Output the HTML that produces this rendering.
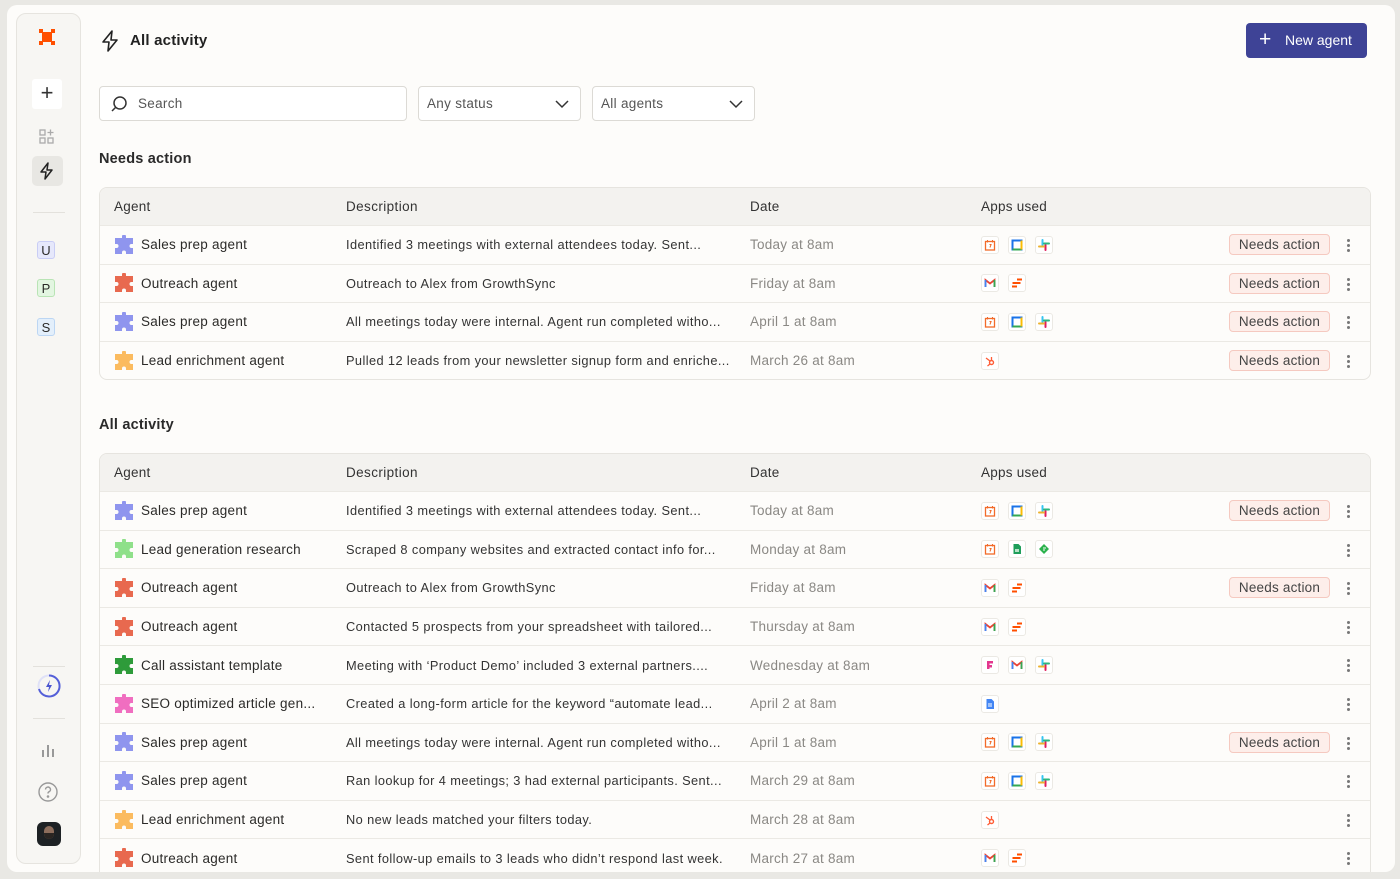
<!DOCTYPE html>
<html><head><meta charset="utf-8"><style>
*{box-sizing:border-box;margin:0;padding:0}
html,body{width:1400px;height:879px;overflow:hidden}
body{background:#e9e8e4;font-family:"Liberation Sans",sans-serif;color:#2b2a28;position:relative}
.card{position:absolute;left:7px;top:5px;width:1388px;height:867px;background:#fdfcfa;border-radius:10px;overflow:hidden}
.side{position:absolute;left:16px;top:13px;width:65px;height:851px;background:#f7f6f3;border:1px solid #e6e4df;border-radius:10px}
.abs{position:absolute}
.tbl{position:absolute;left:99px;width:1272px;border:1px solid #e6e4df;border-radius:8px;background:#fdfcfa;overflow:hidden}
.row{display:flex;align-items:center;height:38.6px;border-top:1px solid #ebe9e4;font-size:13.5px;position:relative;letter-spacing:0.25px}
.hd{background:#f3f2ef;border-top:none;height:37px;font-size:13.5px;color:#333}
.c1{position:absolute;left:14px;display:flex;align-items:center}
.c2{position:absolute;left:246px;font-size:12.8px;color:#333;letter-spacing:0.4px}
.c3{position:absolute;left:650px;color:#8a8884}
.c4{position:absolute;left:881px;display:flex;gap:9px}
.hd .c3{color:#333}
.pz{width:20px;height:20px;margin-right:7px}
.ap{width:18px;height:18px;border:1px solid #ebe9e4;border-radius:3px;background:#fff;display:flex;align-items:center;justify-content:center}
.pill{position:absolute;left:1129px;top:8px;height:21px;width:101px;border:1px solid #f5c9c0;background:#fdeeea;border-radius:4px;font-size:13.5px;color:#444;text-align:center;line-height:19px;letter-spacing:0.2px}
.dots{position:absolute;left:1247px;top:13px;width:3px}
.dots i{display:block;width:3px;height:3px;border-radius:50%;background:#777;margin-bottom:2px}
.sel{position:absolute;top:86px;height:35px;border:1px solid #dcdad5;border-radius:4px;background:#fff;font-size:13.5px;color:#555;line-height:33px;padding-left:8px;letter-spacing:0.3px}
.badge{position:absolute;left:37px;width:18px;height:18px;border-radius:3px;font-size:13px;text-align:center;line-height:17px}
</style></head><body>
<svg width="0" height="0" style="position:absolute"><defs>
<symbol id="pz" viewBox="0 0 20 20"><path d="M1 3h7V1.5a2 2 0 0 1 4 0V3h7v6h-1.5a2 2 0 0 0 0 4H19v6h-7v-1.5a2 2 0 0 0-4 0V19H1v-6h1.5a2 2 0 0 0 0-4H1z"/></symbol>
<symbol id="cal" viewBox="0 0 12 12"><rect x="1.5" y="2.5" width="9" height="8.5" fill="none" stroke="#f26b2a" stroke-width="1.3"/><path d="M3.5 1v2.5M8.5 1v2.5M5.5 5.5h1.5l-1 3" stroke="#f26b2a" stroke-width="1.1" fill="none"/></symbol>
<symbol id="gc" viewBox="0 0 12 12"><rect x="1.5" y="1.5" width="9" height="9" fill="none" stroke="#1a73e8" stroke-width="2"/><path d="M1.5 10.5h9" stroke="#34a853" stroke-width="2"/><path d="M10.5 1.5v9" stroke="#fbbc04" stroke-width="2"/></symbol>
<symbol id="sl" viewBox="0 0 12 12"><path d="M4.5 1v5" stroke="#36c5f0" stroke-width="2" stroke-linecap="round"/><path d="M7.5 6v5" stroke="#e01e5a" stroke-width="2" stroke-linecap="round"/><path d="M6 4.5h5" stroke="#2eb67d" stroke-width="2" stroke-linecap="round"/><path d="M1 7.5h5" stroke="#ecb22e" stroke-width="2" stroke-linecap="round"/></symbol>
<symbol id="gm" viewBox="0 0 12 12"><path d="M1.5 10V3l4.5 3.5L10.5 3v7" fill="none" stroke="#ea4335" stroke-width="1.8"/><path d="M1.5 10V3" stroke="#4285f4" stroke-width="1.8"/><path d="M10.5 10V3" stroke="#34a853" stroke-width="1.8"/></symbol>
<symbol id="zp" viewBox="0 0 12 12"><path d="M6 2.5h5M1.5 6h8M1 9.5h5" stroke="#ff4f00" stroke-width="2"/></symbol>
<symbol id="hs" viewBox="0 0 12 12"><circle cx="7.5" cy="7.5" r="2" fill="none" stroke="#ff5c35" stroke-width="1.4"/><path d="M7.5 5.5V2M6 6 2 3M6 9l-2.5 2" stroke="#ff5c35" stroke-width="1.3"/></symbol>
<symbol id="sh" viewBox="0 0 12 12"><path d="M2.5 1h5l2.5 2.5V11h-7.5z" fill="#1e9e5a"/><rect x="4" y="6" width="4" height="3" fill="#b7e1c7"/></symbol>
<symbol id="fd" viewBox="0 0 12 12"><path d="M6 1l5 5-5 5-5-5z" fill="#2bb24c"/><path d="M5 5h3M5 7h2" stroke="#fff" stroke-width="1"/></symbol>
<symbol id="fg" viewBox="0 0 12 12"><path d="M3 2h6v2.5H5.5v1.5H8v2.5H5.5V10H3z" fill="#e3388f"/></symbol>
<symbol id="gd" viewBox="0 0 12 12"><path d="M2.5 1h5l2.5 2.5V11h-7.5z" fill="#4285f4"/><path d="M4 6h4M4 8h4" stroke="#fff" stroke-width="0.9"/></symbol>
</defs></svg>
<div class="card">
</div>
<div class="side">
<svg class="abs" style="left:21px;top:14px" width="18" height="18" viewBox="0 0 18 18"><rect x="4" y="4" width="10" height="10" fill="#ff4f00"/><rect x="1" y="1" width="4" height="4" fill="#ff4f00"/><rect x="13" y="1" width="4" height="4" fill="#ff4f00"/><rect x="1" y="13" width="4" height="4" fill="#ff4f00"/><rect x="13" y="13" width="4" height="4" fill="#ff4f00"/></svg>
<div class="abs" style="left:15px;top:65px;width:30px;height:30px;background:#fff;border-radius:3px;font-size:22px;text-align:center;line-height:28px;color:#333">+</div>
<svg class="abs" style="left:21px;top:114px" width="18" height="18" viewBox="0 0 18 18" fill="none" stroke="#aaa" stroke-width="1.3"><rect x="2" y="2" width="5" height="5"/><rect x="2" y="10" width="5" height="5"/><rect x="10" y="10" width="5" height="5"/><path d="M12.5 1.5v6M9.5 4.5h6"/></svg>
<div class="abs" style="left:15px;top:142px;width:31px;height:30px;background:#e8e7e3;border-radius:5px"></div>
<svg class="abs" style="left:21px;top:148px" width="18" height="18" viewBox="0 0 18 18" fill="none" stroke="#222" stroke-width="1.5" stroke-linejoin="round"><path d="M10 1 3 10h5l-1 7 7-9H9z"/></svg>
<div class="abs" style="left:16px;top:198px;width:32px;height:1px;background:#e3e1dc"></div>
<div class="badge" style="left:20px;top:227px;background:#e6e8fb;border:1px solid #c9cdf5">U</div>
<div class="badge" style="left:20px;top:265px;background:#e3f6e1;border:1px solid #b9e4b5">P</div>
<div class="badge" style="left:20px;top:304px;background:#e3effb;border:1px solid #bcd6f3">S</div>
<div class="abs" style="left:16px;top:652px;width:32px;height:1px;background:#e3e1dc"></div>
<svg class="abs" style="left:19px;top:659px" width="26" height="26" viewBox="0 0 26 26"><circle cx="13" cy="13" r="10.5" fill="none" stroke="#dfe1f7" stroke-width="2"/><path d="M13 2.5A10.5 10.5 0 1 1 3 16" fill="none" stroke="#5560d8" stroke-width="2"/><path d="M14 7l-4 7h3l-1 5 4-7h-3z" fill="#4a55cf"/></svg>
<div class="abs" style="left:16px;top:704px;width:32px;height:1px;background:#e3e1dc"></div>
<svg class="abs" style="left:23px;top:728px" width="16" height="16" viewBox="0 0 16 16" stroke="#999" stroke-width="2"><path d="M3 8v7M8 3v12M13 7v8"/></svg>
<svg class="abs" style="left:20px;top:767px" width="22" height="22" viewBox="0 0 22 22" fill="none" stroke="#999" stroke-width="1.4"><circle cx="11" cy="11" r="9"/><path d="M8.5 8.5a2.5 2.5 0 1 1 3.5 2.3c-.7.3-1 .8-1 1.7"/><circle cx="11" cy="15.5" r=".6" fill="#999"/></svg>
<div class="abs" style="left:20px;top:808px;width:24px;height:24px;border-radius:6px;background:#1d2124;overflow:hidden"><div style="position:absolute;left:7px;top:4px;width:10px;height:13px;border-radius:5px;background:#8c6d5c"></div><div style="position:absolute;left:7px;top:11px;width:10px;height:6px;border-radius:0 0 5px 5px;background:#2a2522"></div></div>
</div>

<svg class="abs" style="left:100px;top:30px" width="20" height="22" viewBox="0 0 20 22" fill="none" stroke="#222" stroke-width="1.6" stroke-linejoin="round"><path d="M12 1 3 12h6l-1 9 9-11h-6z"/></svg>
<div class="abs" style="left:130px;top:32px;font-size:15px;font-weight:bold;color:#222;letter-spacing:0.2px">All activity</div>
<div class="abs" style="left:1246px;top:23px;width:121px;height:35px;background:#3e4396;border-radius:4px;color:#fff;font-size:14px;line-height:35px"><span style="position:absolute;left:13px;top:-1px;font-size:21px;font-weight:300">+</span><span style="position:absolute;left:39px">New agent</span></div>

<div class="sel" style="left:99px;width:308px;padding-left:38px">Search<svg class="abs" style="left:10px;top:8px" width="18" height="18" viewBox="0 0 18 18" fill="none" stroke="#333" stroke-width="1.5"><circle cx="10" cy="8" r="6"/><path d="M5.5 12.5 2 16"/></svg></div>
<div class="sel" style="left:418px;width:163px">Any status<svg class="abs" style="left:136px;top:12px" width="14" height="10" viewBox="0 0 14 10" fill="none" stroke="#333" stroke-width="1.5"><path d="M1 2l6 6 6-6"/></svg></div>
<div class="sel" style="left:592px;width:163px">All agents<svg class="abs" style="left:136px;top:12px" width="14" height="10" viewBox="0 0 14 10" fill="none" stroke="#333" stroke-width="1.5"><path d="M1 2l6 6 6-6"/></svg></div>

<div class="abs" style="left:99px;top:151px;font-size:14.5px;font-weight:bold;color:#2a2a2a;letter-spacing:0.2px">Needs action</div>
<div class="tbl" style="top:187px">
<div class="row hd"><span class="c1">Agent</span><span class="c2" style="font-size:13.5px">Description</span><span class="c3">Date</span><span class="c4">Apps used</span></div>
<div class="row"><span class="c1"><svg class="pz" fill="#8f95ee"><use href="#pz"/></svg>Sales prep agent</span><span class="c2">Identified 3 meetings with external attendees today. Sent...</span><span class="c3">Today at 8am</span><span class="c4"><span class="ap"><svg width="12" height="12"><use href="#cal"/></svg></span><span class="ap"><svg width="12" height="12"><use href="#gc"/></svg></span><span class="ap"><svg width="12" height="12"><use href="#sl"/></svg></span></span><span class="pill">Needs action</span><span class="dots"><i></i><i></i><i></i></span></div>
<div class="row"><span class="c1"><svg class="pz" fill="#e8694f"><use href="#pz"/></svg>Outreach agent</span><span class="c2">Outreach to Alex from GrowthSync</span><span class="c3">Friday at 8am</span><span class="c4"><span class="ap"><svg width="12" height="12"><use href="#gm"/></svg></span><span class="ap"><svg width="12" height="12"><use href="#zp"/></svg></span></span><span class="pill">Needs action</span><span class="dots"><i></i><i></i><i></i></span></div>
<div class="row"><span class="c1"><svg class="pz" fill="#8f95ee"><use href="#pz"/></svg>Sales prep agent</span><span class="c2">All meetings today were internal. Agent run completed witho...</span><span class="c3">April 1 at 8am</span><span class="c4"><span class="ap"><svg width="12" height="12"><use href="#cal"/></svg></span><span class="ap"><svg width="12" height="12"><use href="#gc"/></svg></span><span class="ap"><svg width="12" height="12"><use href="#sl"/></svg></span></span><span class="pill">Needs action</span><span class="dots"><i></i><i></i><i></i></span></div>
<div class="row"><span class="c1"><svg class="pz" fill="#fbbb5f"><use href="#pz"/></svg>Lead enrichment agent</span><span class="c2">Pulled 12 leads from your newsletter signup form and enriche...</span><span class="c3">March 26 at 8am</span><span class="c4"><span class="ap"><svg width="12" height="12"><use href="#hs"/></svg></span></span><span class="pill">Needs action</span><span class="dots"><i></i><i></i><i></i></span></div>
</div>

<div class="abs" style="left:99px;top:417px;font-size:14.5px;font-weight:bold;color:#2a2a2a;letter-spacing:0.2px">All activity</div>
<div class="tbl" style="top:453px;height:430px">
<div class="row hd"><span class="c1">Agent</span><span class="c2" style="font-size:13.5px">Description</span><span class="c3">Date</span><span class="c4">Apps used</span></div>
<div class="row"><span class="c1"><svg class="pz" fill="#8f95ee"><use href="#pz"/></svg>Sales prep agent</span><span class="c2">Identified 3 meetings with external attendees today. Sent...</span><span class="c3">Today at 8am</span><span class="c4"><span class="ap"><svg width="12" height="12"><use href="#cal"/></svg></span><span class="ap"><svg width="12" height="12"><use href="#gc"/></svg></span><span class="ap"><svg width="12" height="12"><use href="#sl"/></svg></span></span><span class="pill">Needs action</span><span class="dots"><i></i><i></i><i></i></span></div>
<div class="row"><span class="c1"><svg class="pz" fill="#8fe08a"><use href="#pz"/></svg>Lead generation research</span><span class="c2">Scraped 8 company websites and extracted contact info for...</span><span class="c3">Monday at 8am</span><span class="c4"><span class="ap"><svg width="12" height="12"><use href="#cal"/></svg></span><span class="ap"><svg width="12" height="12"><use href="#sh"/></svg></span><span class="ap"><svg width="12" height="12"><use href="#fd"/></svg></span></span><span class="dots"><i></i><i></i><i></i></span></div>
<div class="row"><span class="c1"><svg class="pz" fill="#e8694f"><use href="#pz"/></svg>Outreach agent</span><span class="c2">Outreach to Alex from GrowthSync</span><span class="c3">Friday at 8am</span><span class="c4"><span class="ap"><svg width="12" height="12"><use href="#gm"/></svg></span><span class="ap"><svg width="12" height="12"><use href="#zp"/></svg></span></span><span class="pill">Needs action</span><span class="dots"><i></i><i></i><i></i></span></div>
<div class="row"><span class="c1"><svg class="pz" fill="#e8694f"><use href="#pz"/></svg>Outreach agent</span><span class="c2">Contacted 5 prospects from your spreadsheet with tailored...</span><span class="c3">Thursday at 8am</span><span class="c4"><span class="ap"><svg width="12" height="12"><use href="#gm"/></svg></span><span class="ap"><svg width="12" height="12"><use href="#zp"/></svg></span></span><span class="dots"><i></i><i></i><i></i></span></div>
<div class="row"><span class="c1"><svg class="pz" fill="#2e9b3a"><use href="#pz"/></svg>Call assistant template</span><span class="c2">Meeting with ‘Product Demo’ included 3 external partners....</span><span class="c3">Wednesday at 8am</span><span class="c4"><span class="ap"><svg width="12" height="12"><use href="#fg"/></svg></span><span class="ap"><svg width="12" height="12"><use href="#gm"/></svg></span><span class="ap"><svg width="12" height="12"><use href="#sl"/></svg></span></span><span class="dots"><i></i><i></i><i></i></span></div>
<div class="row"><span class="c1"><svg class="pz" fill="#f06ec0"><use href="#pz"/></svg>SEO optimized article gen...</span><span class="c2">Created a long-form article for the keyword “automate lead...</span><span class="c3">April 2 at 8am</span><span class="c4"><span class="ap"><svg width="12" height="12"><use href="#gd"/></svg></span></span><span class="dots"><i></i><i></i><i></i></span></div>
<div class="row"><span class="c1"><svg class="pz" fill="#8f95ee"><use href="#pz"/></svg>Sales prep agent</span><span class="c2">All meetings today were internal. Agent run completed witho...</span><span class="c3">April 1 at 8am</span><span class="c4"><span class="ap"><svg width="12" height="12"><use href="#cal"/></svg></span><span class="ap"><svg width="12" height="12"><use href="#gc"/></svg></span><span class="ap"><svg width="12" height="12"><use href="#sl"/></svg></span></span><span class="pill">Needs action</span><span class="dots"><i></i><i></i><i></i></span></div>
<div class="row"><span class="c1"><svg class="pz" fill="#8f95ee"><use href="#pz"/></svg>Sales prep agent</span><span class="c2">Ran lookup for 4 meetings; 3 had external participants. Sent...</span><span class="c3">March 29 at 8am</span><span class="c4"><span class="ap"><svg width="12" height="12"><use href="#cal"/></svg></span><span class="ap"><svg width="12" height="12"><use href="#gc"/></svg></span><span class="ap"><svg width="12" height="12"><use href="#sl"/></svg></span></span><span class="dots"><i></i><i></i><i></i></span></div>
<div class="row"><span class="c1"><svg class="pz" fill="#fbbb5f"><use href="#pz"/></svg>Lead enrichment agent</span><span class="c2">No new leads matched your filters today.</span><span class="c3">March 28 at 8am</span><span class="c4"><span class="ap"><svg width="12" height="12"><use href="#hs"/></svg></span></span><span class="dots"><i></i><i></i><i></i></span></div>
<div class="row"><span class="c1"><svg class="pz" fill="#e8694f"><use href="#pz"/></svg>Outreach agent</span><span class="c2">Sent follow-up emails to 3 leads who didn’t respond last week.</span><span class="c3">March 27 at 8am</span><span class="c4"><span class="ap"><svg width="12" height="12"><use href="#gm"/></svg></span><span class="ap"><svg width="12" height="12"><use href="#zp"/></svg></span></span><span class="dots"><i></i><i></i><i></i></span></div>
</div>
<div class="abs" style="left:0;top:872px;width:1400px;height:7px;background:#e9e8e4"></div>
<div class="abs" style="left:1395px;top:0;width:5px;height:879px;background:#e9e8e4"></div>
</body></html>
